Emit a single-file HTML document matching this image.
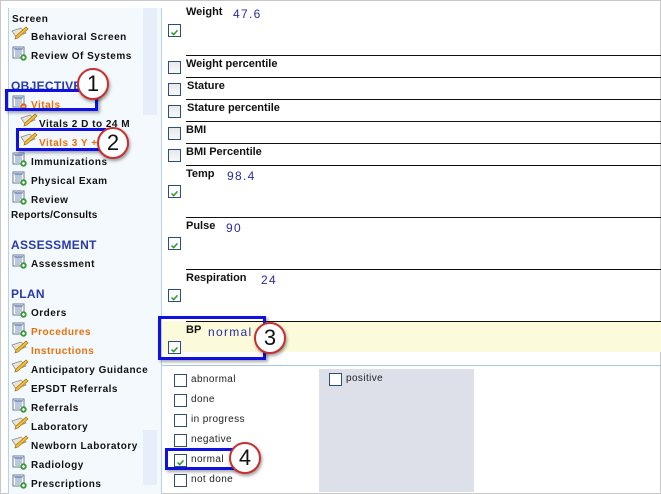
<!DOCTYPE html>
<html><head><meta charset="utf-8"><style>
*{margin:0;padding:0;box-sizing:border-box}
body{width:661px;height:494px;overflow:hidden;background:#fff;font-family:"Liberation Sans",Arial,sans-serif;position:relative}
.a{position:absolute}
#side{left:8px;top:8px;width:153px;height:486px;background:#f3f9fd;border-left:1px solid #b8d0e8}
.stripe{background:#e6eef9}
.it{position:absolute;font-size:10px;font-weight:bold;color:#111;letter-spacing:.5px;white-space:nowrap;line-height:12px;margin-top:2px}
.or{color:#e8700a}
.hd{position:absolute;font-size:12px;font-weight:bold;color:#2a3aa8;line-height:14px;letter-spacing:.3px;margin-top:1px}
.ic{position:absolute;width:15px;height:15px;margin-top:1px}
.lbl{position:absolute;font-size:11px;font-weight:bold;color:#111;line-height:13px;margin-top:1px}
.val{position:absolute;font-size:12px;color:#2a2aa0;font-family:"Liberation Sans",sans-serif;letter-spacing:1.3px}
.cb{position:absolute;width:13px;height:13px;border:1px solid #2b4f7a;background:linear-gradient(#e8e8e8,#f8f8f8)}
.cb.w{background:#fff}
.hl{position:absolute;left:186px;width:475px;height:1px;background:#111}
.bi{position:absolute;font-size:10px;color:#222;letter-spacing:.4px}
.box{position:absolute;border:3px solid #1010e0;box-shadow:2px 2px 3px rgba(0,0,0,.35)}
.circ{position:absolute;width:32px;height:32px;border-radius:50%;background:#fff;border:2px solid #c83030;box-shadow:1px 2px 3px rgba(0,0,0,.4);font-size:22px;line-height:28px;text-align:center;color:#111}
</style></head><body>
<div class="a" style="left:0;top:0;width:661px;height:1px;background:#c8c8c8"></div>
<div class="a" style="left:0;top:0;width:1px;height:494px;background:#c8c8c8"></div>
<div class="a" style="left:660px;top:0;width:1px;height:494px;background:#c8c8c8"></div>
<div class="a" style="left:0;top:493px;width:661px;height:1px;background:#c8c8c8"></div>
<div id="side" class="a"></div>
<div class="a stripe" style="left:143px;top:8px;width:14px;height:107px"></div>
<div class="a stripe" style="left:143px;top:430px;width:14px;height:55px"></div>
<div class="a" style="left:161px;top:8px;width:1px;height:486px;background:#b8d0e8"></div>

<svg width="0" height="0" style="position:absolute"><defs>
<symbol id="doc" viewBox="0 0 15 15"><rect x="1" y="1" width="11" height="11" fill="#fff" stroke="#6a7a9a"/><path d="M3 4h7M3 6h7M3 8h7M3 10h5" stroke="#7b8fb5"/><rect x="2" y="2" width="9" height="1.5" fill="#8da3cc"/><circle cx="11.5" cy="11.5" r="3.2" fill="#3a9a3a"/><path d="M10 11.5h3M11.5 10v3" stroke="#fff" stroke-width="1.2"/></symbol>
<symbol id="docr" viewBox="0 0 15 15"><rect x="1" y="1" width="11" height="11" fill="#fff" stroke="#6a7a9a"/><path d="M3 4h7M3 6h7M3 8h7M3 10h5" stroke="#7b8fb5"/><rect x="2" y="2" width="9" height="1.5" fill="#8da3cc"/><circle cx="11.5" cy="11.5" r="3.2" fill="#e06020"/><path d="M10 11.5h3" stroke="#fff" stroke-width="1.2"/></symbol>
<symbol id="pen" viewBox="0 0 18 15"><path d="M1 6l9-3 5 5-10 4z" fill="#e8e4d8" stroke="#888" stroke-width=".7"/><path d="M5 11L15 2l2 2-10 9-3 1z" fill="#f2c030" stroke="#a07010" stroke-width=".7"/></symbol>
</defs></svg>

<div class="it" style="left:12px;top:12px">Screen</div>
<svg class="ic" style="left:11px;top:24px;width:18px"><use href="#pen"/></svg><div class="it" style="left:31px;top:30px">Behavioral Screen</div>
<svg class="ic" style="left:12px;top:45px"><use href="#doc"/></svg><div class="it" style="left:31px;top:49px">Review Of Systems</div>
<div class="hd" style="left:11px;top:78px">OBJECTIVE</div>
<svg class="ic" style="left:12px;top:94px"><use href="#docr"/></svg><div class="it or" style="left:31px;top:98px">Vitals</div>
<svg class="ic" style="left:20px;top:111px;width:18px"><use href="#pen"/></svg><div class="it" style="left:39px;top:117px">Vitals 2 D to 24 M</div>
<svg class="ic" style="left:20px;top:130px;width:18px"><use href="#pen"/></svg><div class="it or" style="left:39px;top:136px">Vitals 3 Y +</div>
<svg class="ic" style="left:12px;top:151px"><use href="#doc"/></svg><div class="it" style="left:31px;top:155px">Immunizations</div>
<svg class="ic" style="left:12px;top:170px"><use href="#doc"/></svg><div class="it" style="left:31px;top:174px">Physical Exam</div>
<svg class="ic" style="left:12px;top:189px"><use href="#doc"/></svg><div class="it" style="left:31px;top:193px">Review</div>
<div class="it" style="left:11px;top:208px;letter-spacing:.2px">Reports/Consults</div>
<div class="hd" style="left:11px;top:237px">ASSESSMENT</div>
<svg class="ic" style="left:12px;top:253px"><use href="#doc"/></svg><div class="it" style="left:31px;top:257px">Assessment</div>
<div class="hd" style="left:11px;top:286px">PLAN</div>
<svg class="ic" style="left:12px;top:302px"><use href="#doc"/></svg><div class="it" style="left:31px;top:306px">Orders</div>
<svg class="ic" style="left:12px;top:321px"><use href="#doc"/></svg><div class="it or" style="left:31px;top:325px">Procedures</div>
<svg class="ic" style="left:11px;top:338px;width:18px"><use href="#pen"/></svg><div class="it or" style="left:31px;top:344px">Instructions</div>
<svg class="ic" style="left:11px;top:357px;width:18px"><use href="#pen"/></svg><div class="it" style="left:31px;top:363px">Anticipatory Guidance</div>
<svg class="ic" style="left:11px;top:376px;width:18px"><use href="#pen"/></svg><div class="it" style="left:31px;top:382px">EPSDT Referrals</div>
<svg class="ic" style="left:12px;top:397px"><use href="#doc"/></svg><div class="it" style="left:31px;top:401px">Referrals</div>
<svg class="ic" style="left:11px;top:414px;width:18px"><use href="#pen"/></svg><div class="it" style="left:31px;top:420px">Laboratory</div>
<svg class="ic" style="left:11px;top:433px;width:18px"><use href="#pen"/></svg><div class="it" style="left:31px;top:439px">Newborn Laboratory</div>
<svg class="ic" style="left:12px;top:454px"><use href="#doc"/></svg><div class="it" style="left:31px;top:458px">Radiology</div>
<svg class="ic" style="left:12px;top:473px"><use href="#doc"/></svg><div class="it" style="left:31px;top:477px">Prescriptions</div>

<!-- content -->
<div class="a" style="left:162px;top:321px;width:499px;height:31px;background:#fbfbdc"></div>
<div class="hl" style="top:55px"></div><div class="hl" style="top:77px"></div><div class="hl" style="top:99px"></div><div class="hl" style="top:121px"></div><div class="hl" style="top:143px"></div><div class="hl" style="top:165px"></div><div class="hl" style="top:217px"></div><div class="hl" style="top:269px"></div><div class="hl" style="top:321px"></div>
<div class="a" style="left:162px;top:365px;width:499px;height:1px;background:#a8c4e4"></div>

<svg width="0" height="0" style="position:absolute"><defs><symbol id="chk" viewBox="0 0 13 13"><path d="M3 6.5l2.5 2.5 4.5-5" fill="none" stroke="#2a9a2a" stroke-width="1.8"/></symbol></defs></svg>

<div class="lbl" style="left:186px;top:5px">Weight</div><div class="val" style="left:233px;top:7px">47.6</div>
<div class="cb w" style="left:168px;top:24px"><svg width="11" height="11"><use href="#chk"/></svg></div>
<div class="cb" style="left:168px;top:61px"></div><div class="lbl" style="left:186px;top:57px">Weight percentile</div>
<div class="cb" style="left:168px;top:83px"></div><div class="lbl" style="left:187px;top:79px">Stature</div>
<div class="cb" style="left:168px;top:105px"></div><div class="lbl" style="left:187px;top:101px">Stature percentile</div>
<div class="cb" style="left:168px;top:127px"></div><div class="lbl" style="left:186px;top:123px">BMI</div>
<div class="cb" style="left:168px;top:149px"></div><div class="lbl" style="left:186px;top:145px">BMI Percentile</div>
<div class="lbl" style="left:186px;top:167px">Temp</div><div class="val" style="left:227px;top:169px">98.4</div>
<div class="cb w" style="left:168px;top:185px"><svg width="11" height="11"><use href="#chk"/></svg></div>
<div class="lbl" style="left:186px;top:219px">Pulse</div><div class="val" style="left:226px;top:221px">90</div>
<div class="cb w" style="left:168px;top:237px"><svg width="11" height="11"><use href="#chk"/></svg></div>
<div class="lbl" style="left:186px;top:271px">Respiration</div><div class="val" style="left:261px;top:273px">24</div>
<div class="cb w" style="left:168px;top:289px"><svg width="11" height="11"><use href="#chk"/></svg></div>
<div class="lbl" style="left:186px;top:323px">BP</div><div class="val" style="left:208px;top:325px">normal</div>
<div class="cb w" style="left:168px;top:341px"><svg width="11" height="11"><use href="#chk"/></svg></div>

<div class="a" style="left:319px;top:369px;width:155px;height:123px;background:#dde0e8"></div>
<div class="cb w" style="left:174px;top:374px"></div><div class="bi" style="left:191px;top:374px">abnormal</div>
<div class="cb w" style="left:174px;top:394px"></div><div class="bi" style="left:191px;top:394px">done</div>
<div class="cb w" style="left:174px;top:414px"></div><div class="bi" style="left:191px;top:414px">in progress</div>
<div class="cb w" style="left:174px;top:434px"></div><div class="bi" style="left:191px;top:434px">negative</div>
<div class="cb w" style="left:174px;top:454px"><svg width="11" height="11"><use href="#chk"/></svg></div><div class="bi" style="left:191px;top:454px">normal</div>
<div class="cb w" style="left:174px;top:474px"></div><div class="bi" style="left:191px;top:474px">not done</div>
<div class="cb w" style="left:329px;top:373px"></div><div class="bi" style="left:346px;top:373px">positive</div>

<!-- callouts -->
<div class="box" style="left:5px;top:89px;width:93px;height:22px"></div>
<div class="circ" style="left:77px;top:68px">1</div>
<div class="box" style="left:16px;top:128px;width:90px;height:23px"></div>
<div class="circ" style="left:97px;top:127px">2</div>
<div class="box" style="left:158px;top:316px;width:108px;height:44px"></div>
<div class="circ" style="left:254px;top:322px">3</div>
<div class="box" style="left:165px;top:448px;width:72px;height:22px"></div>
<div class="circ" style="left:229px;top:442px">4</div>
</body></html>
